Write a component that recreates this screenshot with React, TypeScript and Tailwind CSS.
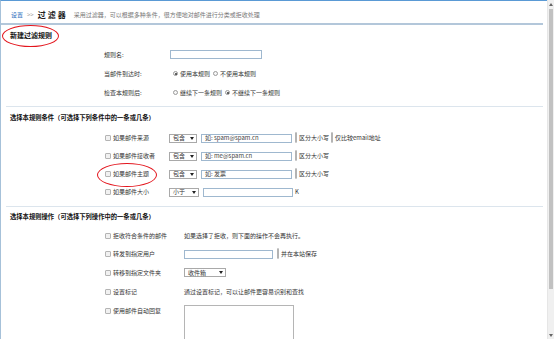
function Radio({ checked = false }: { checked?: boolean }) {
  return (
    <span className="flex h-[5px] w-[5px] shrink-0 items-center justify-center rounded-full border-[0.5px] border-[#9a9a9a] bg-[#f7f7f7]">
      {checked && <span className="h-[2px] w-[2px] rounded-full bg-[#333]" />}
    </span>
  )
}

function Check() {
  return <span className="h-[6px] w-[6px] shrink-0 rounded-[1px] border-[0.5px] border-[#b4b4b4] bg-[#f1f1f1]" />
}

function Select({ label, w }: { label: string; w: string }) {
  return (
    <div className={`flex h-[9px] items-center justify-between border-[0.5px] border-[#a9a9a9] bg-white pl-[3px] pr-[2px] ${w}`}>
      <span>{label}</span>
      <svg width="4" height="3" viewBox="0 0 4 3">
        <polygon points="0,0 4,0 2,3" fill="#222" />
      </svg>
    </div>
  )
}

function Input({ w, placeholder }: { w: string; placeholder?: string }) {
  return (
    <div className={`flex h-[9px] items-center border-[0.5px] border-[#9fb8cf] bg-white pl-[3px] text-[#444] ${w}`}>
      {placeholder}
    </div>
  )
}

function Divider() {
  return <div className="mr-[4px] ml-[5px] h-px bg-[#dce5ed]" />
}

export default function App() {
  return (
    <div className="flex h-[339px] w-[554px] overflow-hidden bg-white font-['Noto_Sans_CJK_SC','Noto_Sans',sans-serif] text-[6px] leading-none text-[#333]">
      <div className="relative flex-1 border-t border-l border-t-[#5a9ad5] border-l-[#a6c1d9]">
        {/* header */}
        <div className="flex h-[22px] items-center gap-[4px] pt-[5px] pl-[10px]">
          <span className="text-[6px] text-[#2a6ebb]">设置</span>
          <span className="text-[6px] text-[#999]">&gt;&gt;</span>
          <span className="text-[8px] font-bold tracking-[2px] text-[#222]">过滤器</span>
          <span className="ml-[2px] text-[6px] text-[#777]">采用过滤器，可以根据多种条件，很方便地对邮件进行分类或拒收处理</span>
        </div>
        <div className="mr-[4px] h-[2px] bg-[#b3c7da]" />

        <div className="flex h-[20px] items-center pl-[9px] text-[7px] font-bold text-[#111]">新建过滤规则</div>

        {/* rule basics */}
        <div className="flex h-[19px] items-center pl-[103px]">
          <span className="w-[66px]">规则名:</span>
          <Input w="w-[92px]" />
        </div>
        <div className="flex h-[19px] items-center pl-[103px]">
          <span className="w-[69px]">当邮件到达时:</span>
          <Radio checked />
          <span className="ml-[2px]">使用本规则</span>
          <span className="ml-[3px]"><Radio /></span>
          <span className="ml-[2px]">不使用本规则</span>
        </div>
        <div className="flex h-[19px] items-center pl-[103px]">
          <span className="w-[69px]">检查本规则后:</span>
          <Radio />
          <span className="ml-[2px]">继续下一条规则</span>
          <span className="ml-[3px]"><Radio checked /></span>
          <span className="ml-[2px]">不继续下一条规则</span>
        </div>
        <div className="mt-[4px]" />
        <Divider />

        {/* conditions */}
        <div className="flex h-[22px] items-center pl-[9px] text-[6.3px] font-bold text-[#111]">
          选择本规则条件（可选择下列条件中的一条或几条）
        </div>
        <div className="flex h-[18px] items-center pl-[104px]">
          <Check />
          <span className="ml-[2px] w-[56px]">如果邮件来源</span>
          <Select label="包含" w="w-[28px]" />
          <span className="ml-[4px]"><Input w="w-[91px]" placeholder="如: spam@spam.cn" /></span>
          <span className="ml-[3px]"><Check /></span>
          <span className="ml-[2px]">区分大小写</span>
          <span className="ml-[2px]"><Check /></span>
          <span className="ml-[2px]">仅比较email地址</span>
        </div>
        <div className="flex h-[18px] items-center pl-[104px]">
          <Check />
          <span className="ml-[2px] w-[56px]">如果邮件接收者</span>
          <Select label="包含" w="w-[28px]" />
          <span className="ml-[4px]"><Input w="w-[91px]" placeholder="如: me@spam.cn" /></span>
          <span className="ml-[3px]"><Check /></span>
          <span className="ml-[2px]">区分大小写</span>
        </div>
        <div className="flex h-[18px] items-center pl-[104px]">
          <Check />
          <span className="ml-[2px] w-[56px]">如果邮件主题</span>
          <Select label="包含" w="w-[28px]" />
          <span className="ml-[4px]"><Input w="w-[91px]" placeholder="如: 发票" /></span>
          <span className="ml-[3px]"><Check /></span>
          <span className="ml-[2px]">区分大小写</span>
        </div>
        <div className="flex h-[18px] items-center pl-[104px]">
          <Check />
          <span className="ml-[2px] w-[56px]">如果邮件大小</span>
          <Select label="小于" w="w-[30px]" />
          <span className="ml-[4px]"><Input w="w-[90px]" /></span>
          <span className="ml-[2px]">K</span>
        </div>
        <div className="mt-[5px]" />
        <Divider />

        {/* actions */}
        <div className="flex h-[20px] items-center pl-[9px] text-[6.3px] font-bold text-[#111]">
          选择本规则操作（可选择下列操作中的一条或几条）
        </div>
        <div className="flex h-[18px] items-center pl-[104px]">
          <Check />
          <span className="ml-[2px] w-[71px]">拒收符合条件的邮件</span>
          <span>如果选择了拒收，则下面的操作不会再执行。</span>
        </div>
        <div className="flex h-[18px] items-center pl-[104px]">
          <Check />
          <span className="ml-[2px] w-[71px]">转发到指定用户</span>
          <Input w="w-[89px]" />
          <span className="ml-[4px]"><Check /></span>
          <span className="ml-[2px]">并在本站保存</span>
        </div>
        <div className="flex h-[19px] items-center pl-[104px]">
          <Check />
          <span className="ml-[2px] w-[71px]">转移到指定文件夹</span>
          <Select label="收件箱" w="w-[42px]" />
        </div>
        <div className="flex h-[19px] items-center pl-[104px]">
          <Check />
          <span className="ml-[2px] w-[71px]">设置标记</span>
          <span>通过设置标记，可以让邮件更容易识别和查找</span>
        </div>
        <div className="flex items-start pl-[104px] pt-[4px]">
          <div className="mt-[3px] flex items-center">
            <Check />
            <span className="ml-[2px] w-[71px]">使用邮件自动回复</span>
          </div>
          <div className="h-[40px] w-[110px] border-[0.5px] border-[#b5b5b5] bg-white" />
        </div>

        {/* annotations */}
        <div className="absolute top-[24px] left-[1px] h-[22px] w-[57px] rounded-[50%] border-[1.5px] border-[#e3151d]" />
        <div className="absolute top-[162px] left-[96px] h-[24px] w-[60px] rounded-[50%] border-[1.5px] border-[#e3151d]" />
      </div>

      {/* scrollbar */}
      <div className="flex w-[7px] flex-col border-l border-[#e6e6e6] bg-[#f0f0f0]">
        <div className="flex h-[8px] items-center justify-center">
          <svg width="4" height="3" viewBox="0 0 4 3">
            <polygon points="0,3 4,3 2,0" fill="#666" />
          </svg>
        </div>
        <div className="mx-[1px] mt-[1px] h-[280px] bg-[#c1c1c1]" />
        <div className="flex-1" />
        <div className="flex h-[8px] items-center justify-center">
          <svg width="4" height="3" viewBox="0 0 4 3">
            <polygon points="0,0 4,0 2,3" fill="#666" />
          </svg>
        </div>
      </div>
    </div>
  )
}
